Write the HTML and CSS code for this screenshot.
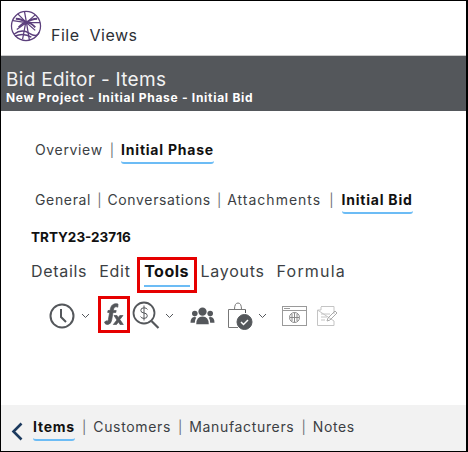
FILE: index.html
```html
<!DOCTYPE html>
<html lang="en">
<head>
<meta charset="utf-8">
<title>Bid Editor - Items</title>
<link rel="stylesheet" href="styles.css">
</head>
<body>
<div class="frame">
  <header class="top">
    <svg class="logo" width="32" height="32" viewBox="0 0 33 33" fill="none" stroke="#5b3f7c" stroke-width="1.3">
      <circle cx="16.500" cy="16.500" r="15"/>
      <path d="M17 13L20 31M16 14L13 30M17 13L3 11M17 13L8 4M17 13L15 2M17 13L26 5M17 13L31 13M17 13L7 20M17 13L26 21"/>
      <path d="M4 25Q12 19 20 24T30 23M5 27Q14 23 22 28" stroke-width="1.500"/>
      <path d="M6 9Q12 9 17 13Q22 9 28 9M9 18Q13 13 17 13Q22 13 26 18" stroke-width="2"/>
    </svg>
    <nav class="menu"><span>File</span><span>Views</span></nav>
  </header>
  <section class="banner">
    <h1>Bid Editor - Items</h1>
    <p>New Project - Initial Phase - Initial Bid</p>
  </section>
  <main class="content">
    <div class="tabs tabs-phase">
      <span>Overview</span><i>|</i><b class="active">Initial Phase</b>
    </div>
    <div class="tabs tabs-bid">
      <span>General</span><i>|</i><span>Conversations</span><i>|</i><span class="wide">Attachments</span><i>|</i><b class="active">Initial Bid</b>
    </div>
    <div class="code">TRTY23-23716</div>
    <div class="subtabs">
      <span>Details</span><span>Edit</span>
      <span class="boxed"><b class="active">Tools</b></span>
      <span>Layouts</span><span class="wide">Formula</span>
    </div>
    <div class="tools">
      <svg class="clock" width="26" height="26" viewBox="0 0 26 26" fill="none" stroke="#54575b" stroke-width="2">
        <circle cx="13" cy="13" r="11.500"/><path d="M12 6V14L17 19"/>
      </svg>
      <svg class="caret" width="9" height="6" viewBox="0 0 9 6" fill="none" stroke="#54575b"><path d="M1 1L4.500 4.500L8 1"/></svg>
      <span class="fx-box">
        <svg width="22" height="25" viewBox="0 0 22 24" fill="#54575b" stroke="#54575b" stroke-width="0.700">
          <path d="M1.500 19.500Q2 22.500 5 22Q8 21.500 8.700 17.500L10 10H12.800L13.200 8H10.400L10.800 6Q11.200 3.800 13.500 4.300L14.800 4.700L15 1.500Q13 0.800 11 1.500Q8 2.500 7.400 6L7 8H5L4.700 10H6.600L5.400 17Q5 19.500 3.500 18.300Z"/>
          <path d="M11 13H14L15.300 15L16.800 13H20L16.900 17L20.300 22H17L15.500 19.400L13.500 22H10.300L13.900 17.500Z"/>
        </svg>
      </span>
      <svg class="search" width="28" height="30" viewBox="0 0 28 30" fill="none" stroke="#54575b">
        <circle cx="12" cy="12" r="10.500" stroke-width="1.800"/>
        <path d="M19.500 20L26.500 27" stroke-width="2.200"/>
        <path d="M15.500 8.500Q14.500 6.800 12 6.800Q8.800 6.800 8.800 9.300T12 12T15.300 14.800T12 17.400Q9.500 17.400 8.500 15.600M12 4.500V19.500"/>
      </svg>
      <svg class="caret caret-search" width="9" height="6" viewBox="0 0 9 6" fill="none" stroke="#54575b"><path d="M1 1L4.500 4.500L8 1"/></svg>
      <svg class="people" width="25" height="18" viewBox="0 0 26 18" fill="#54575b">
        <circle cx="13" cy="4.500" r="4.300"/><path d="M6.500 17.500Q6.500 9.500 13 9.500T19.500 17.500Z"/>
        <circle cx="5" cy="6.500" r="2.900"/><path d="M0.500 16Q0.500 10 5 10L6.500 10.500Q5 13 5 16Z"/>
        <circle cx="21" cy="6.500" r="2.900"/><path d="M25.500 16Q25.500 10 21 10L19.500 10.500Q21 13 21 16Z"/>
      </svg>
      <svg class="clip" width="26" height="28" viewBox="0 0 26 28" fill="none" stroke="#54575b">
        <path d="M0.500 7.500V25.500H10" stroke="#777"/><path d="M17.500 7.500V11"/>
        <path d="M6.500 7.500Q6.500 1 10 1T13.500 7.500" stroke="#777"/><path d="M0.500 7.500H17.500" stroke="#777"/>
        <circle cx="16.500" cy="20" r="7.500" fill="#54575b"/>
        <path d="M13 20L15.500 22.500L20 18" stroke="#fff" stroke-width="1.500"/>
      </svg>
      <svg class="caret caret-clip" width="9" height="6" viewBox="0 0 9 6" fill="none" stroke="#54575b"><path d="M1 1L4.500 4.500L8 1"/></svg>
      <svg class="browser" width="25" height="20" viewBox="0 0 25 20" fill="none" stroke="#9a9a9a">
        <rect x="0.500" y="0.500" width="24" height="19"/>
        <path d="M0.500 4.500H24.500M2 2.500H8"/>
        <circle cx="12.500" cy="11.500" r="5" stroke="#888"/>
        <path d="M12.500 6.500V16.500M8 11.500H17M10 8V15M15 8V15" stroke="#888"/>
      </svg>
      <svg class="note" width="21" height="20" viewBox="0 0 21 20" fill="none" stroke="#c4c4c4">
        <path d="M4 0.500H17V8M17 15V19.500H0.500V4Z"/>
        <path d="M4 1V4H1M4 8H13M4 11H10M4 14H8"/>
        <path d="M10 15L11 12L18 5L20 7L13 14Z" stroke="#aaa"/>
      </svg>
    </div>
  </main>
  <footer class="bottom">
    <svg class="back" width="12" height="19" viewBox="0 0 12 19" fill="none" stroke="#1c3a5e" stroke-width="2.600"><path d="M10.500 1.500L2.500 9.500L10.500 17.500"/></svg>
    <div class="tabs tabs-foot">
      <b class="active">Items</b><i>|</i><span>Customers</span><i>|</i><span>Manufacturers</span><i>|</i><span>Notes</span>
    </div>
  </footer>
</div>
</body>
</html>
```
FILE: styles.css
```css
* { box-sizing: border-box; }
html, body { margin: 0; padding: 0; background: #fff; }
.frame {
  width: 468px;
  height: 452px;
  border: solid #000;
  border-width: 1px 2px 1px 1px;
  display: flex;
  flex-direction: column;
  font-family: Inter, "Liberation Sans", sans-serif;
  color: #3c3f44;
  overflow: hidden;
}
b { font-weight: 700; color: #111; }
i { font-style: normal; }
.top {
  height: 54px;
  flex: none;
  display: flex;
  align-items: flex-start;
  padding: 9px 0 0 9px;
}
.menu {
  display: flex;
  gap: 10px;
  margin: 15px 0 0 9px;
  font-size: 16px;
  line-height: 20px;
  letter-spacing: 0.500px;
  color: #2c2f36;
}
.banner {
  height: 56px;
  flex: none;
  background: #54575b;
  border-top: 1px solid #ccc;
  color: #fff;
  padding: 13px 0 0 5px;
}
.banner h1 { margin: 0; font-size: 19px; line-height: 22px; font-weight: 400; letter-spacing: 0.300px; color: #f2f2f2; }
.banner p { margin: 0; font-size: 12px; line-height: 14px; font-weight: 700; letter-spacing: 0.720px; }
.content { flex: 1; padding: 29px 0 0 30px; }
.tabs { display: flex; align-items: flex-start; font-size: 14px; line-height: 20px; letter-spacing: 0.650px; }
.tabs b { letter-spacing: 0.780px; }
.tabs i { margin: 0 6px; color: #6b6f75; font-size: 13px; letter-spacing: 0; }
.active { display: inline-block; height: 24px; border-bottom: 2px solid #6cbcf5; border-radius: 0 0 3px 3px; }
.tabs-phase { padding-left: 4px; height: 25px; }
.tabs-phase i { margin: 0 7px 0 7px; }
.tabs-bid { padding-left: 4px; margin-top: 25px; height: 25px; }
.tabs-bid .wide { letter-spacing: 1px; }
.tabs-bid i:nth-of-type(3) { margin: 0 8px; }
.code { font-size: 13.500px; font-weight: 700; line-height: 18px; color: #111; margin-top: 13px; }
.subtabs { display: flex; align-items: flex-start; gap: 12px; font-size: 16px; line-height: 22px; letter-spacing: 0.700px; height: 36px; margin-top: 11px; padding-top: 3px; }
.subtabs .wide { letter-spacing: 1.200px; }
.boxed { border: 3px solid #e60000; width: 60px; height: 36px; display: flex; justify-content: center; margin: -3px -8px 0 -6px; }
.boxed b { font-size: 16px; height: 27px; line-height: 22px; width: 46px; text-align: center; border-radius: 0; letter-spacing: 0.500px; }
.tools { display: flex; align-items: center; height: 38px; margin-top: 2px; padding-left: 18px; }
.tools > svg { margin-top: 3px; flex: none; }
.tools > .caret { margin: 3px 0 0 6px; }
.fx-box { flex: none; width: 32px; height: 37px; border: 3px solid #e60000; display: flex; align-items: center; justify-content: center; margin-left: 8px; padding-top: 1px; }
.tools > .search { margin-left: 2px; }
.tools > .caret-search { margin-left: 5px; }
.tools > .people { margin-left: 16px; }
.tools > .clip { margin-left: 13px; }
.tools > .caret-clip { margin-left: 4px; }
.tools > .browser { margin-left: 15px; }
.tools > .note { margin-left: 10px; }
.bottom {
  margin-top: auto;
  height: 46px;
  flex: none;
  background: #f2f2f2;
  display: flex;
  align-items: flex-start;
  padding: 12px 0 0 10px;
}
.back { margin: 5px 0 0 0; flex: none; }
.tabs-foot { margin-left: 10px; height: 25px; }
.tabs-foot i { margin: 0 7px; }
.tabs-foot .active { height: 24px; }
```
